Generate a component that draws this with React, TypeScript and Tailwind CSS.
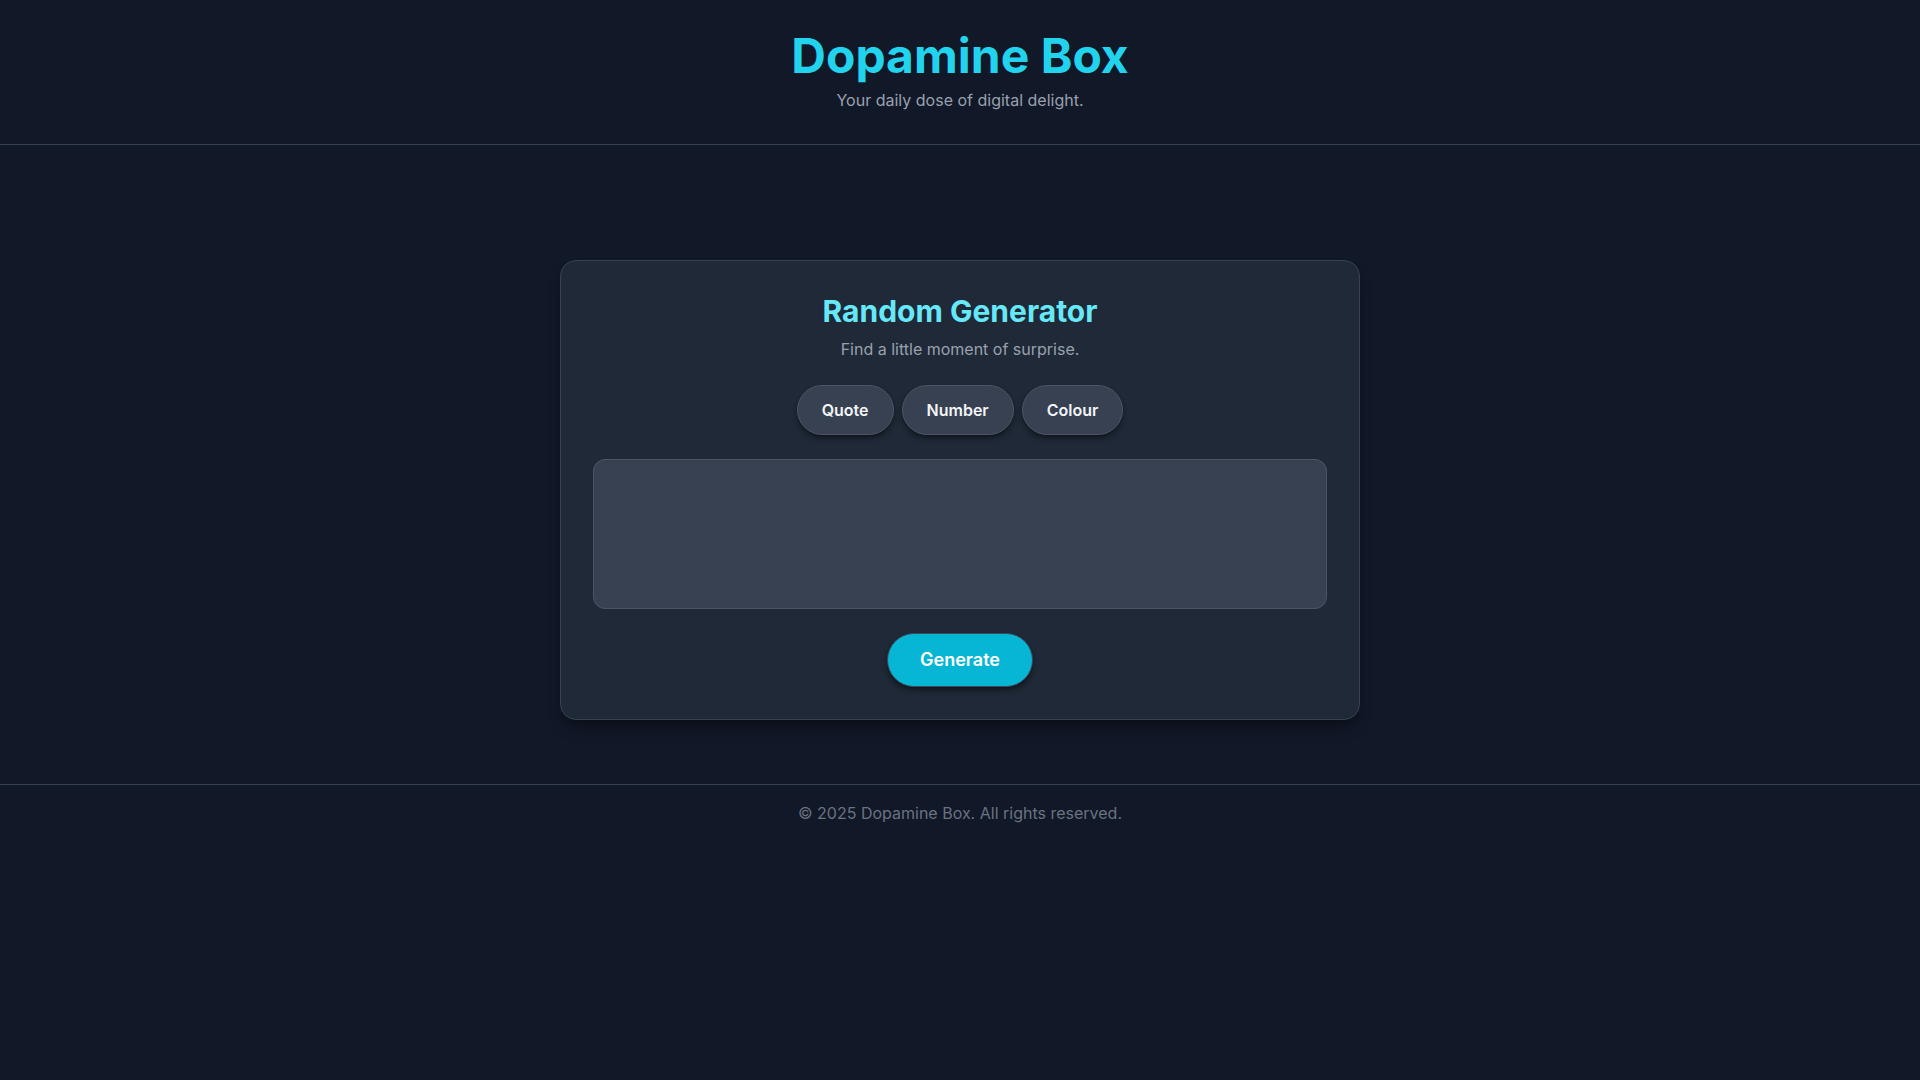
import { useState } from 'react'

const modes = ['Quote', 'Number', 'Colour'] as const

export default function App() {
  const [mode, setMode] = useState<string | null>(null)

  return (
    <div
      className="min-h-screen bg-[#111827] text-gray-100"
      style={{ fontFamily: 'Inter, "Noto Sans", sans-serif' }}
    >
      {/* Header */}
      <header className="border-b border-[#374151] py-8 text-center">
        <h1 className="text-5xl leading-none font-bold text-[#22d3ee]">Dopamine Box</h1>
        <p className="mt-2 text-base text-gray-400">Your daily dose of digital delight.</p>
      </header>

      {/* Generator card */}
      <main className="flex justify-center pt-[115px] pb-16">
        <section className="w-[800px] rounded-2xl border border-[#374151] bg-[#1f2937] p-8 text-center shadow-lg shadow-black/30">
          <h2 className="text-3xl font-bold text-[#67e8f9]">Random Generator</h2>
          <p className="mt-2 text-base text-gray-400">Find a little moment of surprise.</p>

          <div className="mt-6 flex justify-center gap-2">
            {modes.map((m) => (
              <button
                key={m}
                onClick={() => setMode(m)}
                className="rounded-full border border-[#4b5563] bg-[#374151] px-6 py-3 text-base font-semibold text-gray-100 shadow-md shadow-black/40"
              >
                {m}
              </button>
            ))}
          </div>

          <div className="mt-6 h-[150px] rounded-xl border border-[#4b5563] bg-[#374151]">
            {mode && <span className="sr-only">{mode}</span>}
          </div>

          <button className="mt-6 rounded-full border border-[#3b4a5c] bg-[#06b6d4] px-8 py-3 text-lg font-semibold text-white shadow-md shadow-black/40">
            Generate
          </button>
        </section>
      </main>

      {/* Footer */}
      <footer className="border-t border-[#374151] py-4 text-center">
        <p className="text-base text-gray-500">© 2025 Dopamine Box. All rights reserved.</p>
      </footer>
    </div>
  )
}
